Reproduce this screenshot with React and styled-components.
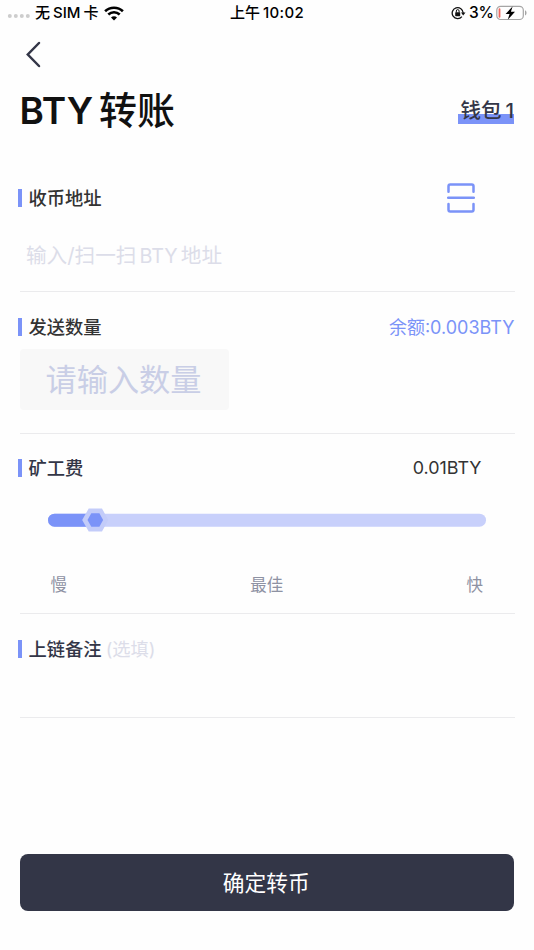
import React from 'react';
import styled, { createGlobalStyle } from 'styled-components';

const Global = createGlobalStyle`
  * { box-sizing: border-box; }
  body { margin: 0; background: #fefefe; font-family: Inter, "Noto Sans CJK SC", sans-serif; }
`;
const Screen = styled.main`
  width: 534px;
  height: 950px;
  display: flex;
  flex-direction: column;
  background: #fefefe;
  overflow: hidden;
`;
const Text = styled.span`
  display: block;
  white-space: nowrap;
  font-size: ${p => p.$size}px;
  line-height: ${p => p.$line || 26}px;
  font-weight: ${p => p.$weight || 400};
  color: ${p => p.$color};
  letter-spacing: ${p => p.$track || 0}px;
`;
const StatusBar = styled.header`
  height: 26px;
  flex: none;
  display: grid;
  grid-template-columns: 1fr auto 1fr;
  align-items: center;
  padding: 0 7px 0 7px;
`;
const Group = styled.div`
  display: flex;
  align-items: center;
  justify-content: ${p => (p.$end ? 'flex-end' : 'flex-start')};
  gap: ${p => p.$gap || 0}px;
`;
const NavBar = styled.nav`
  height: 56px;
  flex: none;
  padding: 15px 0 0 26px;
`;
const TitleRow = styled.div`
  height: 56px;
  flex: none;
  display: flex;
  justify-content: space-between;
  align-items: center;
  padding: 0 20px 0 19.5px;
`;
const Title = styled.h1`
  margin: 0;
  display: flex;
  align-items: baseline;
  gap: 6px;
`;
const Wallet = styled.div`
  display: flex;
  align-items: baseline;
  gap: 4px;
  height: 28px;
  padding: 2px 0 0 2.5px;
  background: linear-gradient(#7b93f8, #7b93f8) 0 18px / 100% 10px no-repeat;
`;
const Section = styled.section`
  height: ${p => p.$height}px;
  flex: none;
  margin: 0 19.5px;
  padding-top: ${p => p.$top}px;
  border-bottom: 1px solid #ebebed;
`;
const SectionHead = styled.div`
  height: 30px;
  margin-left: -2px;
  display: flex;
  align-items: center;
  justify-content: space-between;
  padding-right: ${p => p.$right || 0}px;
`;
const Label = styled.div`
  display: flex;
  align-items: center;
  gap: 7px;
  &::before { content: ""; width: 4px; height: 18px; background: #7b93f8; }
`;
const Placeholder = styled.div`
  display: flex;
  align-items: baseline;
  gap: 3px;
  padding: 30px 0 0 6.5px;
`;
const AmountField = styled.div`
  width: 209px;
  height: 61px;
  margin-top: 7px;
  padding-left: 26px;
  display: flex;
  align-items: center;
  border-radius: 4px;
  background: #f8f8f8;
`;
const Slider = styled.div`
  height: 24px;
  margin: 25px 28px 0 28.5px;
`;
const Marks = styled.div`
  display: grid;
  grid-template-columns: 1fr auto 1fr;
  margin: 40px 31.5px 0 31px;
  & > :last-child { text-align: right; }
`;
const Confirm = styled.button`
  height: 57px;
  flex: none;
  margin: 136px 20px 0 19.5px;
  padding: 1px 1px 0 0;
  border: 0;
  border-radius: 8px;
  background: #333647;
  display: flex;
  align-items: center;
  justify-content: center;
  font-family: inherit;
`;

const Signal = () => (
  <svg width="23" height="10" viewBox="0 0 23 10">
    {[2.8, 8.8, 14.8, 20.8].map(x => <circle key={x} cx={x} cy="8" r="2" fill="#cdcdcd" />)}
  </svg>
);
const Wifi = () => (
  <svg width="20" height="15" viewBox="0 0 20 15" fill="none" stroke="#000" strokeWidth="2.6">
    <path d="M1.1 5.2C6 .5 14 .5 18.9 5.2M4.3 8.5c3.2-3 8.2-3 11.4 0" />
    <path d="M7 11.4c1.7-1.6 4.3-1.6 6 0l-3 3z" fill="#000" stroke="none" />
  </svg>
);
const RotationLock = () => (
  <svg width="15" height="14" viewBox="0 0 15 14" fill="none" stroke="#111" strokeWidth="1.3">
    <path d="M10.9 10.7A5.5 5.5 0 1 1 12.2 7" />
    <path d="M10 6.6h4.5L12.2 9.5z" fill="#111" stroke="none" />
    <rect x="4.2" y="6.2" width="5" height="4" rx=".6" fill="#111" stroke="none" />
    <path d="M5.3 6.5V5a1.4 1.4 0 0 1 2.8 0v1.5" strokeWidth="1" />
  </svg>
);
const Battery = () => (
  <svg width="31" height="16" viewBox="0 0 31 16">
    <rect x=".8" y="1.3" width="26.5" height="13.2" rx="3.8" fill="none" stroke="#a5a5a5" strokeWidth="1.2" />
    <path d="M29 5.3c2 .7 2 4.5 0 5.2z" fill="#a5a5a5" />
    <rect x="2.6" y="3.2" width="1.8" height="9.5" rx=".8" fill="#f0665c" />
    <path d="M16.6 1.5 9.6 8.9h4L11.8 14.6l7.2-7.9h-4.1z" fill="#000" />
  </svg>
);
const Back = () => (
  <svg width="15" height="27" viewBox="0 0 15 27" fill="none" stroke="#333647" strokeWidth="2.5" strokeLinecap="round">
    <path d="M13 2 1.8 13.5 13 25" />
  </svg>
);
const Scan = () => (
  <svg width="28" height="30" viewBox="0 0 28 30" fill="none" stroke="#7b93f8" strokeWidth="2.5" strokeLinecap="round">
    <path d="M1.5 8.7V3.2Q1.5 1.5 3.2 1.5H24.8Q26.5 1.5 26.5 3.2V8.7M1.5 21v5.8q0 1.7 1.7 1.7H24.8q1.7 0 1.7-1.7V21M1.2 14.8H26.8" />
  </svg>
);
const FeeTrack = () => (
  <svg width="439" height="24" viewBox="0 0 439 24">
    <rect y="5.7" width="438" height="13" rx="6.5" fill="#c8d0fb" />
    <path d="M6.5 5.7H47v13H6.5a6.5 6.5 0 0 1 0-13z" fill="#7b93f8" />
    <path d="M40.7.5H54L60.3 12 54 23.5H40.7L34.2 12z" fill="#c3ccf9" />
    <path d="M43.3 5.3h8.1L55.1 12l-3.7 6.7h-8.1L39.5 12z" fill="#7b93f8" />
  </svg>
);

export default function App() {
  return (
    <>
      <Global />
      <Screen>
        <StatusBar>
          <Group $gap={5}>
            <Signal />
            <Group $gap={3}>
              <Text $size={15} $weight={500} $color="#000">无</Text>
              <Text $size={15} $weight={500} $color="#000">SIM</Text>
              <Text $size={15} $weight={500} $color="#000">卡</Text>
            </Group>
            <Wifi />
          </Group>
          <Group $gap={3}>
            <Text $size={15} $weight={500} $color="#000">上午</Text>
            <Text $size={15} $weight={500} $color="#000" $track={0.3}>10:02</Text>
          </Group>
          <Group $end $gap={2.5}>
            <RotationLock />
            <Group $gap={2}>
              <Text $size={15.5} $weight={500} $color="#000">3%</Text>
              <Battery />
            </Group>
          </Group>
        </StatusBar>
        <NavBar><Back /></NavBar>
        <TitleRow>
          <Title>
            <Text $size={37} $line={54} $weight={600} $color="#111">BTY</Text>
            <Text $size={38} $line={54} $weight={500} $color="#111">转账</Text>
          </Title>
          <Wallet>
            <Text $size={20.5} $weight={500} $color="#333647">钱包</Text>
            <Text $size={20.5} $weight={500} $color="#333647">1</Text>
          </Wallet>
        </TitleRow>
        <Section $height={154} $top={45}>
          <SectionHead $right={39.5}>
            <Label><Text $size={18.3} $weight={500} $color="#333">收币地址</Text></Label>
            <Scan />
          </SectionHead>
          <Placeholder>
            <Text $size={20.6} $color="#dcdde9">输入/扫一扫</Text>
            <Text $size={19.8} $color="#dcdde9">BTY</Text>
            <Text $size={20.6} $color="#dcdde9">地址</Text>
          </Placeholder>
        </Section>
        <Section $height={142} $top={20}>
          <SectionHead>
            <Label><Text $size={18.3} $weight={500} $color="#333">发送数量</Text></Label>
            <Text $size={18} $line={27} $color="#7b93f8">余额:0.003BTY</Text>
          </SectionHead>
          <AmountField><Text $size={31.2} $line={46} $color="#c9cee6">请输入数量</Text></AmountField>
        </Section>
        <Section $height={180} $top={19}>
          <SectionHead $right={33}>
            <Label><Text $size={18.3} $weight={500} $color="#333647">矿工费</Text></Label>
            <Text $size={17.9} $color="#333">0.01BTY</Text>
          </SectionHead>
          <Slider><FeeTrack /></Slider>
          <Marks>
            <Text $size={16.5} $color="#8e92a3">慢</Text>
            <Text $size={16.5} $color="#8e92a3">最佳</Text>
            <Text $size={16.5} $color="#8e92a3">快</Text>
          </Marks>
        </Section>
        <Section $height={104} $top={20}>
          <SectionHead>
            <Group $gap={4}>
              <Label><Text $size={18.3} $weight={500} $color="#333647">上链备注</Text></Label>
              <Text $size={18.3} $color="#dcdde9">(选填)</Text>
            </Group>
          </SectionHead>
        </Section>
        <Confirm><Text $size={21.7} $line={32} $color="#fff">确定转币</Text></Confirm>
      </Screen>
    </>
  );
}
